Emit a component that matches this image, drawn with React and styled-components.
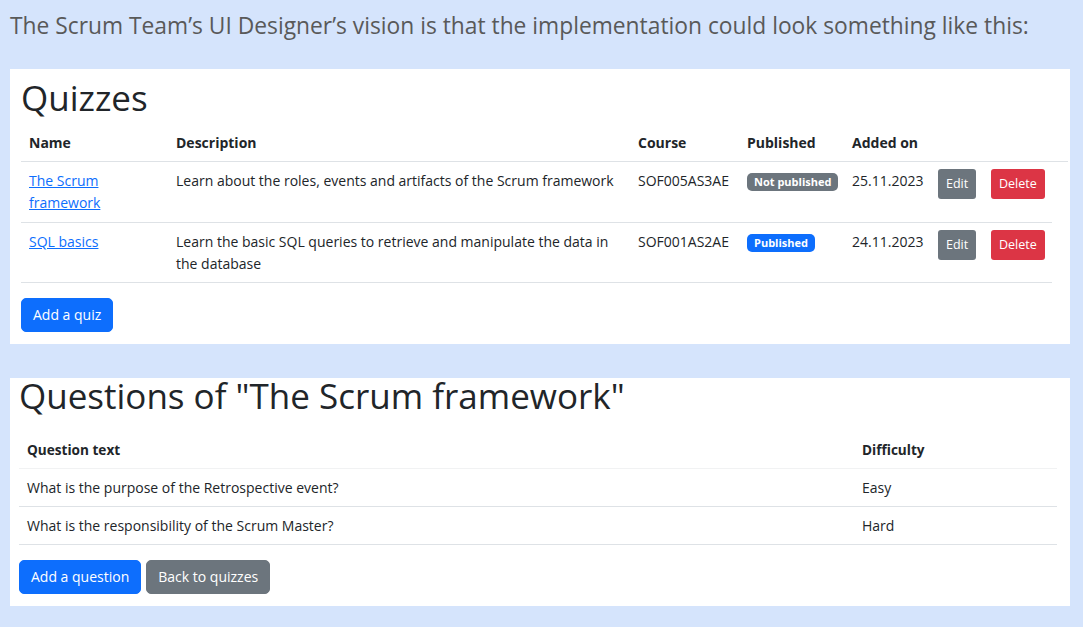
import React from "react";
import styled, { createGlobalStyle } from "styled-components";

const GlobalStyle = createGlobalStyle`
  body {
    margin: 0;
    background-color: #d5e4fc;
    font-family: "Open Sans", "Noto Sans", sans-serif;
  }
`;

const quizzes = [
  {
    name: "The Scrum framework",
    description: "Learn about the roles, events and artifacts of the Scrum framework",
    course: "SOF005AS3AE",
    published: false,
    added: "25.11.2023",
  },
  {
    name: "SQL basics",
    description: "Learn the basic SQL queries to retrieve and manipulate the data in the database",
    course: "SOF001AS2AE",
    published: true,
    added: "24.11.2023",
  },
];

const questions = [
  { text: "What is the purpose of the Retrospective event?", difficulty: "Easy" },
  { text: "What is the responsibility of the Scrum Master?", difficulty: "Hard" },
];

export default function App() {
  return (
    <>
      <GlobalStyle />
      <Page>
        <Intro>
          The Scrum Team’s UI Designer’s vision is that the implementation could look something like this:
        </Intro>

        <Panel $padX="11px" $padTop="8px">
          <Title>Quizzes</Title>
          <Table>
            <thead>
              <tr>
                <Th $w="147px">Name</Th>
                <Th $w="462px">Description</Th>
                <Th $w="109px">Course</Th>
                <Th $w="105px">Published</Th>
                <Th $w="86px">Added on</Th>
                <Th $w="53px"></Th>
                <Th $w="69px"></Th>
                <Th $w="15px"></Th>
              </tr>
            </thead>
            <tbody>
              {quizzes.map((q) => (
                <tr key={q.name}>
                  <Td>
                    <Link href="#">{q.name}</Link>
                  </Td>
                  <Td>{q.description}</Td>
                  <Td>{q.course}</Td>
                  <Td>
                    <Badge $published={q.published}>
                      {q.published ? "Published" : "Not published"}
                    </Badge>
                  </Td>
                  <Td>{q.added}</Td>
                  <Td>
                    <SmallButton $variant="secondary">Edit</SmallButton>
                  </Td>
                  <Td>
                    <SmallButton $variant="danger">Delete</SmallButton>
                  </Td>
                  <Spacer />
                </tr>
              ))}
            </tbody>
          </Table>
          <Actions>
            <Button $variant="primary">Add a quiz</Button>
          </Actions>
        </Panel>

        <Panel $padX="9px" $padTop="0">
          <Title $compact>Questions of "The Scrum framework"</Title>
          <Table $compact>
            <thead>
              <tr>
                <Th $compact>Question text</Th>
                <Th $compact $w="203px">Difficulty</Th>
              </tr>
            </thead>
            <tbody>
              {questions.map((q) => (
                <tr key={q.text}>
                  <Td $compact>{q.text}</Td>
                  <Td $compact>{q.difficulty}</Td>
                </tr>
              ))}
            </tbody>
          </Table>
          <Actions $gap="5px">
            <Button $variant="primary">Add a question</Button>
            <Button $variant="secondary">Back to quizzes</Button>
          </Actions>
        </Panel>
      </Page>
    </>
  );
}

const colors = {
  primary: "#0d6efd",
  secondary: "#6c757d",
  danger: "#dc3545",
};

const Page = styled.div`
  padding: 10px 13px 22px 10px;
  display: flex;
  flex-direction: column;
  gap: 34px;
`;

const Intro = styled.p`
  margin: 0 0 -7px;
  font-size: 22.8px;
  line-height: 32px;
  color: #595959;
  white-space: nowrap;
`;

const Panel = styled.section`
  background: #fff;
  padding: ${(p) => p.$padTop} ${(p) => p.$padX} 12px;
  color: #212529;
`;

const Title = styled.h1`
  margin: 0 0 ${(p) => (p.$compact ? "18px" : "6px")};
  font-weight: 400;
  font-size: 35px;
  line-height: ${(p) => (p.$compact ? "36px" : "42px")};
`;

const Table = styled.table`
  table-layout: fixed;
  border-collapse: collapse;
  width: ${(p) => (p.$compact ? "1038px" : "1046px")};
  font-size: 14px;
  line-height: 22px;
  text-align: left;
`;

const Th = styled.th`
  box-sizing: border-box;
  width: ${(p) => p.$w || "auto"};
  padding: 7px 8px;
  font-size: ${(p) => (p.$compact ? "13.6px" : "14px")};
  font-weight: 700;
  vertical-align: bottom;
  border-bottom: 1px solid ${(p) => (p.$compact ? "#f1f2f3" : "#dee2e6")};
`;

const Td = styled.td`
  padding: ${(p) => (p.$compact ? "8px 8px 7px" : "8px 8px 7.5px")};
  vertical-align: top;
  border-bottom: 1px solid #dee2e6;
`;

const Spacer = styled.td`
  padding: 0;
`;

const Link = styled.a`
  color: ${colors.primary};
  text-decoration: underline;
`;

const Badge = styled.span`
  display: inline-block;
  margin-top: 3px;
  padding: 2px 7px;
  border-radius: 5px;
  font-size: 11px;
  font-weight: 700;
  line-height: 14px;
  white-space: nowrap;
  color: #fff;
  background: ${(p) => (p.$published ? colors.primary : colors.secondary)};
`;

const SmallButton = styled.button`
  font-family: inherit;
  font-size: 12.5px;
  line-height: 20px;
  padding: 5px 8px;
  margin-top: -1px;
  border: none;
  border-radius: 3px;
  color: #fff;
  background: ${(p) => colors[p.$variant]};
`;

const Actions = styled.div`
  display: flex;
  gap: ${(p) => p.$gap || "0"};
  margin-top: 15px;
`;

const Button = styled.button`
  font-family: inherit;
  font-size: 14px;
  line-height: 22px;
  padding: 5px 11px;
  border: 1px solid ${(p) => colors[p.$variant]};
  border-radius: 5px;
  color: #fff;
  background: ${(p) => colors[p.$variant]};
`;
